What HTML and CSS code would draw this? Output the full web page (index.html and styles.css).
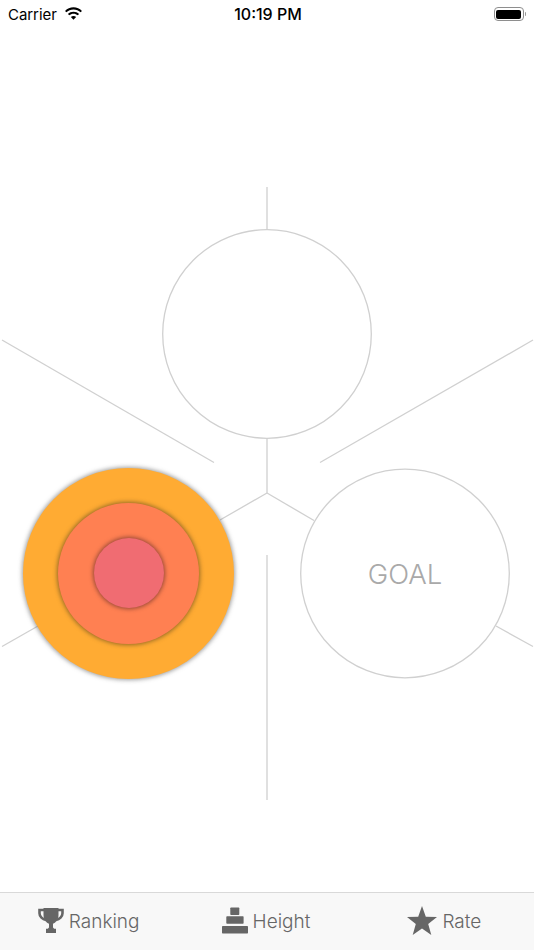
FILE: index.html
```html
<!DOCTYPE html>
<html lang="en">
<head>
<meta charset="utf-8">
<title>Goal</title>
<link rel="stylesheet" href="styles.css">
</head>
<body>
<div class="page">
  <header class="status">
    <div class="status-left">
      <span>Carrier</span>
      <svg class="wifi" viewBox="0 0 18 13" width="19" height="14">
        <path d="M9 2.200c2.600 0 5 1 6.800 2.700l1.200-1.300C14.900 1.500 12.100.2 9 .2S3.100 1.500 1 3.600l1.200 1.300C4 3.200 6.400 2.200 9 2.200z"/>
        <path d="M9 6.200c1.500 0 2.900.6 4 1.600l1.300-1.300C12.900 5.100 11 4.300 9 4.300S5.100 5.100 3.700 6.500L5 7.800c1.100-1 2.500-1.600 4-1.600z"/>
        <path d="M9 8.300c-1 0-1.800.4-2.500 1L9 12l2.500-2.700c-.7-.6-1.500-1-2.500-1z"/>
      </svg>
    </div>
    <div class="status-time">10:19 PM</div>
    <div class="status-right">
      <span class="battery"><span class="battery-fill"></span></span>
      <span class="battery-cap"></span>
    </div>
  </header>

  <main class="board">
    <svg class="lines" viewBox="0 28 534 864" width="534" height="864">
      <line x1="267" y1="187" x2="267" y2="229"/>
      <line x1="267" y1="438" x2="267" y2="493"/>
      <line x1="267" y1="493" x2="220" y2="520"/>
      <line x1="267" y1="493" x2="314" y2="520.500"/>
      <line x1="267" y1="555" x2="267" y2="800"/>
      <line x1="2" y1="340" x2="214" y2="462.500"/>
      <line x1="320" y1="462.500" x2="533" y2="340"/>
      <line x1="2" y1="646.500" x2="38" y2="626"/>
      <line x1="496" y1="626" x2="533" y2="646.500"/>
      <circle cx="267" cy="334" r="104.300"/>
      <circle cx="405" cy="573.500" r="104.300"/>
    </svg>
    <div class="goal">GOAL</div>
    <div class="ring ring-outer">
      <div class="ring ring-mid">
        <div class="ring ring-inner"></div>
      </div>
    </div>
  </main>

  <nav class="tabbar">
    <div class="tab tab-ranking">
      <svg class="icon" viewBox="0 0 26 25" width="26" height="25">
        <path d="M5.500 0h15v7c0 4.800-3 7.800-5.500 8.700V19c0 1 1 1.800 2.200 1.800H18V25H8v-4.200h.8C10 20.800 11 20 11 19v-3.300C8.500 14.800 5.500 11.800 5.500 7z"/>
        <path class="handle" d="M6 2H1.500v3.200C1.500 8.500 4.500 11.500 8 12"/>
        <path class="handle" d="M20 2h4.500v3.200c0 3.300-3 6.300-6.500 6.800"/>
      </svg>
      <span class="tab-label">Ranking</span>
    </div>
    <div class="tab tab-height">
      <svg class="icon" viewBox="0 0 26 27" width="26" height="27">
        <rect x="8.300" y="0.500" width="9" height="7.500" rx="0.700"/>
        <rect x="4.300" y="9.200" width="17.300" height="7.500" rx="0.700"/>
        <rect x="0" y="19" width="26" height="7.500" rx="0.700"/>
      </svg>
      <span class="tab-label">Height</span>
    </div>
    <div class="tab tab-rate">
      <svg class="icon" viewBox="0 0 30 29" width="30" height="29">
        <polygon points="15,0 18.800,10.700 30,11 21.200,18 24.300,29 15,22.600 5.700,29 8.800,18 0,11 11.200,10.700"/>
      </svg>
      <span class="tab-label">Rate</span>
    </div>
  </nav>
</div>
</body>
</html>
```

FILE: styles.css
```css
* { box-sizing: border-box; }
html, body { margin: 0; padding: 0; background: #fff; }
body { font-family: Inter, "Liberation Sans", sans-serif; }

.page {
  width: 534px;
  height: 950px;
  display: flex;
  flex-direction: column;
  overflow: hidden;
}

.status {
  height: 28px;
  flex: none;
  display: grid;
  grid-template-columns: 1fr auto 1fr;
  align-items: center;
  padding: 0 8px 0 8px;
  color: #000;
}
.status-left {
  display: flex;
  align-items: center;
  gap: 7px;
  font-size: 15px;
  letter-spacing: -0.050px;
}
.wifi { fill: #000; margin-top: -1px; }
.status-time { font-size: 16px; font-weight: 500; margin-left: 2px; }
.status-right { display: flex; justify-content: flex-end; align-items: center; }
.battery {
  width: 30px;
  height: 14px;
  border: 1px solid #8e8e8e;
  border-radius: 4px;
  padding: 1.500px;
  display: flex;
}
.battery-fill { flex: 1; background: #000; border-radius: 2px; }
.battery-cap { width: 1.500px; height: 4px; background: #9a9a9a; border-radius: 0 1px 1px 0; margin-left: 1px; }

.board { position: relative; flex: 1; }
.lines { display: block; }
.lines line, .lines circle { stroke: #d0d0d0; stroke-width: 1.300; fill: none; }

.goal {
  position: absolute;
  left: 301px;
  width: 208px;
  top: 526.500px;
  text-align: center;
  font-size: 27.500px;
  line-height: 38px;
  font-weight: 300;
  color: #a9a9a9;
}

.ring { border-radius: 50%; display: flex; align-items: center; justify-content: center; }
.ring-outer {
  position: absolute;
  left: 23px;
  top: 439.500px;
  width: 211px;
  height: 211px;
  background: #ffab33;
  box-shadow: 0 0 4px 1px rgba(80, 80, 80, 0.55);
}
.ring-mid {
  width: 141px;
  height: 141px;
  background: #ff8052;
  box-shadow: 0 0 4px 1px rgba(90, 70, 30, 0.65);
}
.ring-inner {
  width: 70px;
  height: 70px;
  background: #f06c72;
  box-shadow: 0 0 4px 1px rgba(90, 40, 40, 0.65);
}

.tabbar {
  height: 58px;
  flex: none;
  background: #f8f8f8;
  border-top: 1px solid #d9d9d9;
  display: flex;
  color: #666;
  font-size: 19px;
  font-weight: 350;
}
.tab { flex: 1; display: flex; align-items: center; justify-content: center; gap: 5px; padding-bottom: 2px; }
.tab-label { padding-top: 2px; }
.tab-height, .tab-rate { padding-right: 1px; }
.icon { fill: #666; flex: none; }
.handle { fill: none; stroke: #666; stroke-width: 2.600; }
```
